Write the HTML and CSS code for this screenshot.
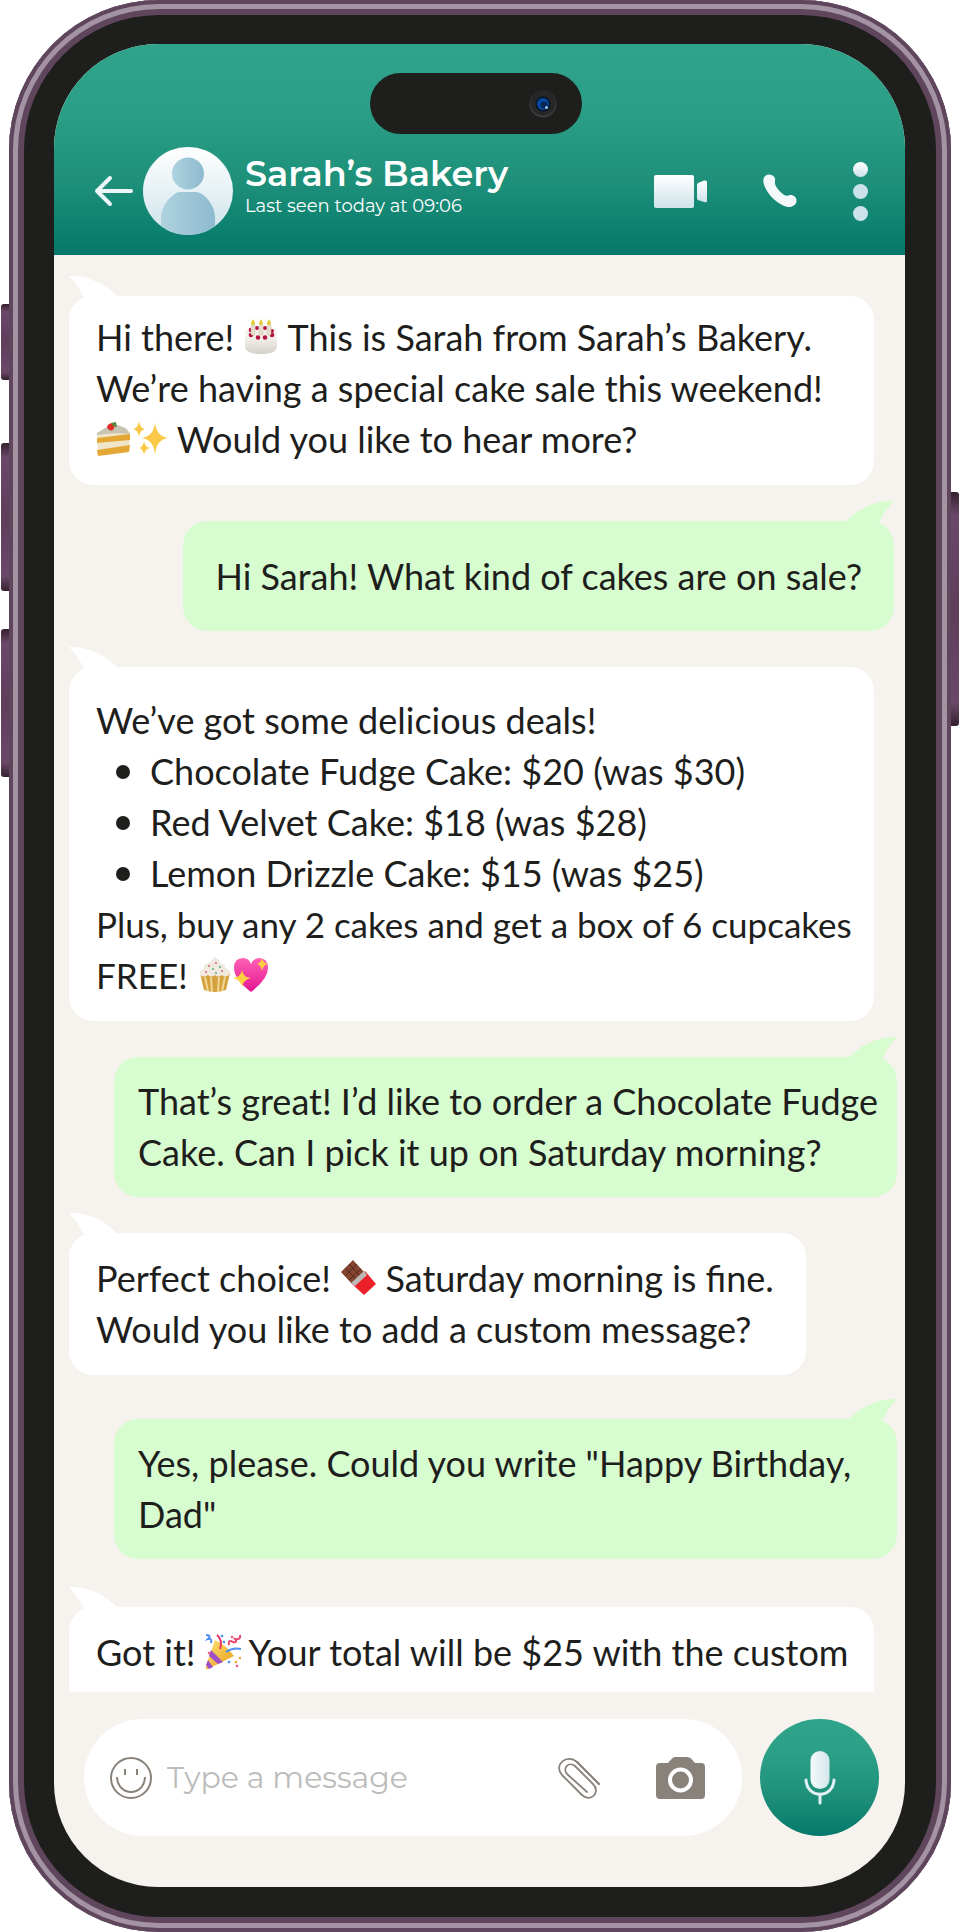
FILE: index.html
```html
<!DOCTYPE html>
<html lang="en">
<head>
    <meta charset="UTF-8">
    <meta name="viewport" content="width=device-width, initial-scale=1.0">
    <title>Sarah’s Bakery | Chat</title>
    <link rel="stylesheet" href="styles.css">
</head>
<body>

    <!-- Shared gradients -->
    <svg class="defs" width="0" height="0" aria-hidden="true">
        <defs>
            <linearGradient id="ice" x1="0" y1="0" x2="0" y2="1"><stop offset="0" stop-color="#fff"/><stop offset="1" stop-color="#cde3ea"/></linearGradient>
            <linearGradient id="iceSide"><stop offset="0" stop-color="#f5fafb"/><stop offset="1" stop-color="#d3e6ec"/></linearGradient>
            <linearGradient id="person"><stop offset="0" stop-color="#afd2df"/><stop offset="1" stop-color="#8ebacf"/></linearGradient>
            <linearGradient id="gold" x1="0" y1="0" x2="1" y2="1"><stop offset="0" stop-color="#ffe672"/><stop offset="1" stop-color="#e99a1d"/></linearGradient>
            <linearGradient id="cream" x1="0" y1="0" x2="0" y2="1"><stop offset="0" stop-color="#fbf9f4"/><stop offset="1" stop-color="#d5d1c9"/></linearGradient>
            <linearGradient id="pink" x1="0" y1="0" x2="0" y2="1"><stop offset="0" stop-color="#ff62b6"/><stop offset="1" stop-color="#e31592"/></linearGradient>
        </defs>
    </svg>

    <div class="phone">
        <span class="side-key key-mute"></span>
        <span class="side-key key-up"></span>
        <span class="side-key key-down"></span>
        <span class="side-key key-power"></span>

        <main class="screen">
            <header>
                <div class="island">
                    <svg width="28" height="28" viewBox="0 0 28 28" aria-hidden="true">
                        <circle cx="14" cy="14" r="13.5" fill="#3b3d3e"/>
                        <circle cx="14" cy="13" r="12.5" fill="#252729"/>
                        <circle cx="14" cy="14" r="7.5" fill="#07142a"/>
                        <circle cx="14" cy="14" r="6" fill="#064a9e"/>
                        <circle cx="15" cy="15" r="3.5" fill="#082657"/>
                        <circle cx="17.5" cy="17.5" r="1.5" fill="#9cc5d6"/>
                    </svg>
                </div>

                <div class="top-bar">
                    <a href="#" class="back" aria-label="Back">
                        <svg width="40" height="32" viewBox="0 0 40 32">
                            <path d="M16 3 L3 16 L16 29 M4 16 H37" fill="none" stroke="#edf5f8" stroke-width="4" stroke-linecap="round" stroke-linejoin="round"/>
                        </svg>
                    </a>
                    <svg class="avatar" width="90" height="88" viewBox="0 0 90 88" role="img" aria-label="Contact photo">
                        <clipPath id="round"><ellipse cx="45" cy="44" rx="45" ry="44"/></clipPath>
                        <g clip-path="url(#round)">
                            <rect width="90" height="88" fill="url(#ice)"/>
                            <circle cx="45" cy="26.5" r="16" fill="url(#person)"/>
                            <path d="M18 88 V69 C19 59 26 50 34 45.5 Q36 45 38 45 H52 Q55 45 57 46 C66 51 72 61 72 71 V88 Z" fill="url(#person)"/>
                        </g>
                    </svg>
                    <div class="contact">
                        <h1>Sarah’s Bakery</h1>
                        <p>Last seen today at 09:06</p>
                    </div>
                    <div class="actions">
                        <button type="button" aria-label="Video call">
                            <svg width="53" height="33" viewBox="0 0 53 33" fill="url(#ice)">
                                <rect width="40" height="33" rx="2"/>
                                <path d="M43 10 Q43 9 44 8 L50 5.5 Q53 5 53 7 V26 Q53 28 50 27 L44 25 Q43 24 43 23 Z"/>
                            </svg>
                        </button>
                        <button type="button" aria-label="Call">
                            <svg width="34" height="34" viewBox="0 0 34 34">
                                <path d="M6 0.5 C10 0.5 13 3.5 12 7.5 C11.5 10 13 13.5 17 17.5 C20.5 21 23 22.5 25.5 21.5 C29.5 20 33.5 23 33.5 26.5 C33.5 31 29 33.5 25 33 C14 30.5 2 18.5 0.3 7.5 C0 3.5 2.5 0.5 6 0.5 Z" fill="#f3f9fa"/>
                            </svg>
                        </button>
                        <button type="button" aria-label="Menu">
                            <svg width="15" height="59" viewBox="0 0 15 59">
                                <circle cx="7.5" cy="7.5" r="7.5" fill="url(#ice)"/>
                                <circle cx="7.5" cy="29.5" r="7.5" fill="#cbe2ea"/>
                                <circle cx="7.5" cy="51.5" r="7.5" fill="#cbe2ea"/>
                            </svg>
                        </button>
                    </div>
                </div>
            </header>

            <section class="chat">
                <div class="message received snug">
                    <svg class="tail" viewBox="0 0 49 30"><path d="M0 0 Q27 -1 49 21 V30 H18 Q12 12 0 0 Z"/></svg>
                    <p>Hi there! <svg class="emoji" viewBox="0 0 36 36" role="img" aria-label="Birthday cake">
                            <path d="M2 14 V28 Q3 35 18 35 Q33 35 34 28 V14 Z" fill="url(#cream)"/>
                            <ellipse cx="18" cy="14" rx="16" ry="6.5" fill="#f5f2ec"/>
                            <g fill="#b5123f"><circle cx="8" cy="11" r="2.3"/><circle cx="14" cy="9" r="2"/><circle cx="22" cy="9" r="2"/><circle cx="29" cy="12" r="2"/><circle cx="8" cy="16" r="2.3"/><circle cx="15" cy="18.5" r="2.3"/><circle cx="22" cy="18.5" r="2.3"/><circle cx="29" cy="16" r="2.3"/></g>
                            <g fill="#e6dfcf" stroke="#c9c0ac" stroke-width=".5"><rect x="8" y="6" width="4" height="10" rx="1"/><rect x="16" y="6" width="4" height="10" rx="1"/><rect x="24" y="6" width="4" height="10" rx="1"/></g>
                            <path d="M10 0 Q14 6 10 6 Q6 6 10 0 M18 0 Q22 6 18 6 Q14 6 18 0 M26 0 Q30 6 26 6 Q22 6 26 0" fill="#e6cc37"/>
                        </svg> This is Sarah from Sarah’s Bakery. We’re having a special cake sale this weekend! <svg class="emoji" viewBox="0 0 36 36" role="img" aria-label="Shortcake">
                            <path d="M1 12 L16 3 Q31 5 34 13 L33 30 L2 34 Z" fill="#f0e5c9"/>
                            <path d="M1 12 L16 3 Q31 5 34 13 Q18 11 1 14 Z" fill="#c9c3b2"/>
                            <path d="M1 17 L34 13 V19 L1 22 Z M1 29 L34 24 L33 31 L2 35 Z" fill="#e2a735"/>
                            <path d="M11 6 Q12 2 17 2 Q20 5 17 9 Q13 11 11 6" fill="#df2c24"/>
                            <path d="M15 2 L20 1 L21 6 L17 5 Z" fill="#57853a"/>
                        </svg><svg class="emoji" viewBox="0 0 36 36" role="img" aria-label="Sparkles">
                            <path d="M23 1 Q24 15 36 17 Q24 19 23 34 Q22 19 10 17 Q22 15 23 1 Z M7 0 Q8 7 13 8 Q8 9 7 16 Q6 9 1 8 Q6 7 7 0 Z M12 20 Q13 26 18 27 Q13 28 12 34 Q11 28 7 27 Q11 26 12 20 Z" fill="#fbc848"/>
                        </svg> Would you like to hear more?</p>
                </div>

                <div class="message sent roomy">
                    <svg class="tail" viewBox="0 0 49 30"><path d="M49 0 Q22 -1 0 21 V30 H31 Q37 12 49 0 Z"/></svg>
                    <p>Hi Sarah! What kind of cakes are on sale?</p>
                </div>

                <div class="message received deals">
                    <svg class="tail" viewBox="0 0 49 30"><path d="M0 0 Q27 -1 49 21 V30 H18 Q12 12 0 0 Z"/></svg>
                    <p>We’ve got some delicious deals!</p>
                    <ul>
                        <li>Chocolate Fudge Cake: $20 (was $30)</li>
                        <li>Red Velvet Cake: $18 (was $28)</li>
                        <li>Lemon Drizzle Cake: $15 (was $25)</li>
                    </ul>
                    <p class="bonus">Plus, buy any 2 cakes and get a box of 6 cupcakes FREE! <svg class="emoji" viewBox="0 0 36 36" role="img" aria-label="Cupcake">
                            <path d="M3 16 L7 33 Q18 37 29 33 L33 16 Z" fill="#d4a13c"/>
                            <path d="M8 20 L11 34 M14 20 L15 35 M22 20 L21 35 M28 20 L25 34" stroke="#f1d796" stroke-width="2"/>
                            <path d="M3 18 Q1 13 7 12 Q6 7 12 6 Q15 4 17 0 Q23 2 23 6 Q29 7 28 11 Q34 12 32 18 Q28 21 25 18 Q21 21 18 18 Q14 21 11 18 Q6 21 3 18" fill="#efe9e0"/>
                            <g fill="#da5576"><circle cx="12" cy="9" r=".9"/><circle cx="19" cy="6" r=".9"/><circle cx="25" cy="14" r=".9"/><circle cx="9" cy="15" r=".9"/></g>
                            <g fill="#4e9f84"><circle cx="16" cy="12" r=".9"/><circle cx="23" cy="10" r=".9"/><circle cx="19" cy="16" r=".9"/></g>
                        </svg><svg class="emoji" viewBox="0 0 36 36" role="img" aria-label="Sparkling heart">
                            <path d="M18 35 Q1 22 1 11 Q1 1 10 1 Q16 1 18 7 Q21 1 26 1 Q35 1 35 11 Q35 22 18 35 Z" fill="url(#pink)"/>
                            <path d="M9 13 Q10 20 18 21 Q10 23 9 30 Q8 23 0 21 Q8 20 9 13 Z M29 1 Q30 6 35 7 Q30 8 29 14 Q28 8 24 7 Q28 6 29 1 Z" fill="#ffcf42"/>
                        </svg></p>
                </div>

                <div class="message sent">
                    <svg class="tail" viewBox="0 0 49 30"><path d="M49 0 Q22 -1 0 21 V30 H31 Q37 12 49 0 Z"/></svg>
                    <p>That’s great! I’d like to order a Chocolate Fudge Cake. Can I pick it up on Saturday morning?</p>
                </div>

                <div class="message received narrow">
                    <svg class="tail" viewBox="0 0 49 30"><path d="M0 0 Q27 -1 49 21 V30 H18 Q12 12 0 0 Z"/></svg>
                    <p>Perfect choice! <svg class="emoji" viewBox="0 0 36 36" role="img" aria-label="Chocolate bar">
                            <path d="M13 0 L25 13 L12 24 L1 12 Z" fill="#83452f"/>
                            <path d="M9 4 L21 17 M5 8 L17 20 M17 4 L5 16 M21 9 L9 20" stroke="#552a20" stroke-width="1"/>
                            <path d="M25 11 L36 24 L24 35 L12 24 Z" fill="#ed2029"/>
                            <path d="M24 11 L27 15 L15 26 L11 23 Z" fill="#bbb9b8"/>
                        </svg> Saturday morning is fine. Would you like to add a custom message?</p>
                </div>

                <div class="message sent spaced">
                    <svg class="tail" viewBox="0 0 49 30"><path d="M49 0 Q22 -1 0 21 V30 H31 Q37 12 49 0 Z"/></svg>
                    <p>Yes, please. Could you write "Happy Birthday, Dad"</p>
                </div>

                <div class="message received latest">
                    <svg class="tail" viewBox="0 0 49 30"><path d="M0 0 Q27 -1 49 21 V30 H18 Q12 12 0 0 Z"/></svg>
                    <p>Got it! <svg class="emoji" viewBox="0 0 36 36" role="img" aria-label="Party popper">
                            <path d="M10 6 Q21 11 29 22 L3 35 Q0 36 1 32 Z" fill="url(#gold)"/>
                            <path d="M6 16 L18 28 L13 30 L4 22 Z M3 26 L8 33 L4 35 L1 31 Z" fill="#a04fcb"/>
                            <path d="M15 15 Q18 6 12 1" fill="none" stroke="#eb3569" stroke-width="2"/>
                            <path d="M21 18 Q28 13 36 15 M1 1 Q7 1 3 5 Q7 4 6 9" fill="none" stroke="#4e8df0" stroke-width="2"/>
                            <path d="M24 11 Q23 5 28 8 Q33 9 30 5 Q36 6 35 1" fill="none" stroke="#e8446e" stroke-width="2"/>
                            <g fill="#4e8df0"><circle cx="19" cy="8" r="1.3"/><circle cx="17" cy="2" r="1.3"/><circle cx="24" cy="28" r="1.3"/></g>
                            <g fill="#f6a33a"><circle cx="35" cy="24" r="1.3"/><circle cx="31" cy="28" r="1.3"/></g>
                            <g fill="#ec5e85"><circle cx="4" cy="19" r="1.3"/><circle cx="32" cy="32" r="1.3"/><circle cx="27" cy="3" r="1.3"/></g>
                        </svg> Your total will be $25 with the custom</p>
                </div>
            </section>

            <form class="composer">
                <div class="field">
                    <button type="button" aria-label="Emoji">
                        <svg width="42" height="42" viewBox="0 0 42 42" fill="none" stroke="#88827a" stroke-width="2">
                            <circle cx="21" cy="21" r="20"/>
                            <path d="M15 12 V18 M27 12 V18 M7 20 C8 40 34 40 35 20"/>
                        </svg>
                    </button>
                    <input type="text" placeholder="Type a message" aria-label="Type a message">
                    <button type="button" aria-label="Attach file">
                        <svg width="42" height="42" viewBox="0 0 42 42" fill="none" stroke="#88827a" stroke-width="1.8" stroke-linecap="round" stroke-linejoin="round">
                            <path d="M41 27 L19 5 C9 -4 -5 8 4 18 L24 38 C33 46 43 35 35 27 L17 9 C11 4 4 11 9 17 L29 35"/>
                            <path d="M41 27 L19 5" />
                        </svg>
                    </button>
                    <button type="button" aria-label="Camera">
                        <svg width="49" height="42" viewBox="0 0 49 42">
                            <path d="M4 6 H12 L16 1.5 Q17 0 19 0 H31 Q34 0 35 1.5 L39 6 H45 Q49 6 49 10 V38 Q49 42 45 42 H4 Q0 42 0 38 V10 Q0 6 4 6 Z" fill="#88827a"/>
                            <circle cx="24.5" cy="23" r="10.5" fill="none" stroke="#fff" stroke-width="4"/>
                        </svg>
                    </button>
                </div>
                <button type="button" class="mic" aria-label="Record voice message">
                    <svg width="32" height="54" viewBox="0 0 32 54">
                        <rect x="6.5" y="0" width="19" height="38" rx="9.5" fill="url(#iceSide)"/>
                        <path d="M2 29 C3 48 29 48 30 29 M16 43 V52" fill="none" stroke="#e3f0f4" stroke-width="3" stroke-linecap="round"/>
                    </svg>
                </button>
            </form>
        </main>
    </div>

</body>
</html>
```

FILE: styles.css
```css
:root {
    --black: #1e1e1c;
    --plum: #5f465c;
    --plum-light: #a494a3;
    --paper: #f6f2ee;
    --sent: #d7fccf;
    --green: linear-gradient(#2fa48b 0%, #2ca086 30%, #1e907a 65%, #04796b 100%);
}

* { margin: 0; padding: 0; box-sizing: border-box; }
body { background: #fff; color: var(--black); font-family: 'Lato', sans-serif; }
button { border: none; background: none; cursor: pointer; }
button, .back { display: flex; align-items: center; justify-content: center; flex-shrink: 0; }

.defs { position: absolute; }

/* PHONE BODY */
.phone {
    position: relative;
    height: 100vh;
    margin: 0 9px;
    padding: 44px 46px 45px 45px;
    border-radius: 150px;
    background: var(--black);
    box-shadow: inset 0 0 0 4px var(--plum), inset 0 0 0 9px var(--plum-light), inset 0 0 0 15px var(--plum);
}

.side-key {
    position: absolute;
    left: -8px;
    width: 8px;
    border-radius: 3px 0 0 3px;
    background: linear-gradient(#35202f, #6b4868 10%, #5f3d5b 50%, #6b4868 90%, #35202f);
}

.key-mute { top: 304px; height: 76px; }
.key-up { top: 443px; height: 148px; }
.key-down { top: 629px; height: 148px; }
.key-power { top: 492px; left: auto; right: -8px; height: 234px; border-radius: 0 3px 3px 0; }

.screen {
    display: flex;
    flex-direction: column;
    height: 100%;
    border-radius: 104px;
    overflow: hidden;
    background: var(--paper);
}

/* HEADER */
header { padding: 29px 8px 20px 0; background: var(--green); }

.island {
    display: flex;
    align-items: center;
    justify-content: flex-end;
    width: 212px;
    height: 61px;
    margin: 0 auto 13px;
    padding-right: 25px;
    border-radius: 31px;
    background: var(--black);
}

.top-bar { display: flex; align-items: center; padding: 0 29px 0 40px; }
.avatar { flex-shrink: 0; margin: 0 12px 0 9px; }
.contact { flex: 1; padding-bottom: 12px; color: #fff; font-family: 'Montserrat', sans-serif; white-space: nowrap; }
.contact h1 { font-size: 35px; line-height: 42px; font-weight: 600; }
.contact p { font-size: 18px; line-height: 22px; }
.actions { display: flex; align-items: center; gap: 56px; }

/* MESSAGES */
.chat {
    display: flex;
    flex: 1;
    flex-direction: column;
    align-items: flex-start;
    gap: 36px;
    min-height: 0;
    padding: 41px 8px 0 15px;
    overflow: hidden;
}

.message {
    position: relative;
    flex-shrink: 0;
    padding: 20px 12px 20px 27px;
    border-radius: 24px;
    font-size: 36px;
    line-height: 51px;
}

.received { max-width: calc(100% - 23px); background: #fff; fill: #fff; }
.sent { align-self: flex-end; max-width: calc(100% - 45px); padding: 19px 12px 19px 24px; background: var(--sent); fill: var(--sent); }
.snug { padding-top: 16px; }
.roomy { margin-right: 3px; padding: 30px 32px 29px; }
.deals { padding-top: 28px; }
.deals .bonus { font-size: 35px; }
.narrow { max-width: 89%; }
.spaced { margin-top: 8px; }

/* runs on below the visible part of the chat */
.latest { width: 100%; margin-top: 12px; padding-bottom: 60px; }

.tail { position: absolute; top: -20px; left: 0; width: 49px; height: 30px; }
.sent .tail { left: auto; right: 0; }
.emoji { width: 36px; height: 36px; vertical-align: -4px; }

.message ul { padding-left: 20px; list-style: none; }
.message li { display: flex; align-items: center; gap: 20px; }
.message li::before { content: ''; flex-shrink: 0; width: 14px; height: 14px; border-radius: 50%; background: var(--black); }

/* INPUT BAR */
.composer { display: flex; gap: 18px; padding: 27px 26px 51px 30px; }

.field {
    display: flex;
    flex: 1;
    align-items: center;
    min-width: 0;
    height: 117px;
    padding: 0 37px 0 26px;
    border-radius: 59px;
    background: #fff;
}

.field input {
    flex: 1;
    min-width: 0;
    margin-left: 15px;
    border: none;
    outline: none;
    background: none;
    font-family: 'Montserrat', sans-serif;
    font-size: 30px;
}

.field input::placeholder { color: #bcbcba; opacity: 1; }
.field button:last-child { margin-left: 56px; }

.mic { width: 119px; height: 117px; border-radius: 50%; background: var(--green); }
```
